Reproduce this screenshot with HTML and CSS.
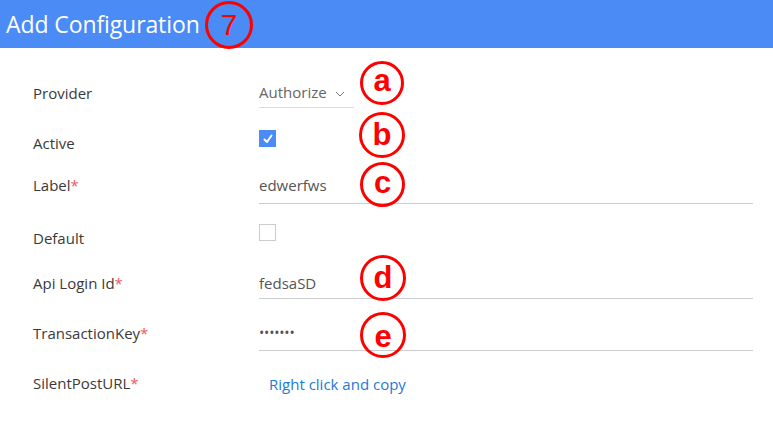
FILE: index.html
```html
<!DOCTYPE html>
<html>
<head>
<meta charset="utf-8">
<link rel="stylesheet" href="styles.css">
</head>
<body>
<div class="page">
  <header class="header">
    <h1 class="title">Add Configuration</h1>
  </header>
  <main class="form">
    <div class="row row-provider">
      <div class="label">Provider</div>
      <div class="control">
        <div class="select">
          <span>Authorize</span>
          <svg class="chev" width="10" height="6" viewBox="0 0 10 6"><polyline points="1,1 5,5 9,1" fill="none" stroke="#777" stroke-width="1"/></svg>
        </div>
      </div>
    </div>
    <div class="row row-active">
      <div class="label">Active</div>
      <div class="control">
        <div class="check checked">
          <svg width="12" height="12" viewBox="0 0 12 12"><polyline points="2.5,6.5 5,9 9.5,2.5" fill="none" stroke="#fff" stroke-width="2" stroke-linecap="round" stroke-linejoin="round"/></svg>
        </div>
      </div>
    </div>
    <div class="row row-label">
      <div class="label">Label<span class="req">*</span></div>
      <div class="control"><div class="input input-label">edwerfws</div></div>
    </div>
    <div class="row row-default">
      <div class="label">Default</div>
      <div class="control"><div class="check"></div></div>
    </div>
    <div class="row row-api">
      <div class="label">Api Login Id<span class="req">*</span></div>
      <div class="control"><div class="input input-api">fedsaSD</div></div>
    </div>
    <div class="row row-key">
      <div class="label">TransactionKey<span class="req">*</span></div>
      <div class="control"><div class="input input-key"><span class="dots">•••••••</span></div></div>
    </div>
    <div class="row row-url">
      <div class="label">SilentPostURL<span class="req">*</span></div>
      <div class="control"><a class="link" href="#">Right click and copy</a></div>
    </div>
  </main>

  <div class="mark mark-7">7</div>
  <div class="mark mark-a">a</div>
  <div class="mark mark-b">b</div>
  <div class="mark mark-c">c</div>
  <div class="mark mark-d">d</div>
  <div class="mark mark-e">e</div>
</div>
</body>
</html>
```
FILE: styles.css
```css
* { box-sizing: border-box; }
html, body { margin: 0; padding: 0; background: #fff; }
body { font-family: "Open Sans", "Noto Sans", sans-serif; color: #333; }
.page { position: relative; width: 773px; height: 430px; overflow: hidden; }

.header { height: 48px; background: #4b8bf5; display: flex; align-items: center; padding-left: 6px; }
.title { margin: 0; font-weight: 400; font-size: 23px; color: #fff; line-height: 30px; letter-spacing: -0.1px; }

.form { padding-top: 20px; }
.row { display: grid; grid-template-columns: 226px 1fr; padding-left: 33px; padding-right: 20px; }
.label { font-size: 15px; line-height: 20px; color: #3a3a3a; }
.req { color: #f0595a; }

.row-provider { height: 50px; }
.row-provider .label { padding-top: 15px; }
.row-provider .control { padding-top: 10px; }
.select { width: 95px; height: 30px; line-height: 29px; border-bottom: 1px solid #ddd; font-size: 15px; color: #666; display: flex; align-items: center; gap: 8px; }
.chev { margin-top: 2px; }

.row-active { height: 45px; }
.row-active .label { padding-top: 15px; }
.row-active .control { padding-top: 12px; }

.check { width: 17px; height: 17px; border: 1px solid #ccc; background: #fff; display: flex; align-items: center; justify-content: center; }
.check.checked { background: #4b8bf5; border-color: #4b8bf5; }

.input { font-size: 15px; color: #555; line-height: 30px; border-bottom: 1px solid #ccc; }

.row-label { height: 50px; }
.row-label .label { padding-top: 12px; }
.row-label .control { padding-top: 7px; }
.input-label { padding-bottom: 3px; }

.row-default { height: 50px; }
.row-default .label { padding-top: 15px; }
.row-default .control { padding-top: 11px; }

.row-api { height: 45px; }
.row-api .label { padding-top: 10px; }
.row-api .control { padding-top: 5px; }

.row-key { height: 50px; }
.row-key .label { padding-top: 15px; }
.row-key .control { padding-top: 9px; }
.input-key { padding-bottom: 2px; }
.dots { font-size: 14px; letter-spacing: -0.2px; color: #555; }

.row-url { height: 50px; }
.row-url .label { padding-top: 15px; }
.row-url .control { padding-top: 15px; padding-left: 10px; }
.link { font-size: 15px; line-height: 20px; color: #1d7ad6; text-decoration: none; }

.mark { position: absolute; border: 3px solid #f00; border-radius: 50%; color: #f00; display: flex; align-items: center; justify-content: center; font-family: "Liberation Sans", Arial, sans-serif; font-weight: 700; font-size: 31px; }
.mark-7 { left: 205px; top: 1px; width: 48px; height: 48px; font-weight: 400; font-size: 30px; }
.mark-a { left: 360px; top: 61px; width: 44px; height: 44px; padding-bottom: 4px; }
.mark-b { left: 359px; top: 112px; width: 46px; height: 46px; }
.mark-c { left: 360px; top: 162px; width: 45px; height: 45px; padding-bottom: 3px; }
.mark-d { left: 360px; top: 255px; width: 46px; height: 46px; }
.mark-e { left: 360px; top: 312px; width: 46px; height: 46px; padding-top: 3px; }
```
